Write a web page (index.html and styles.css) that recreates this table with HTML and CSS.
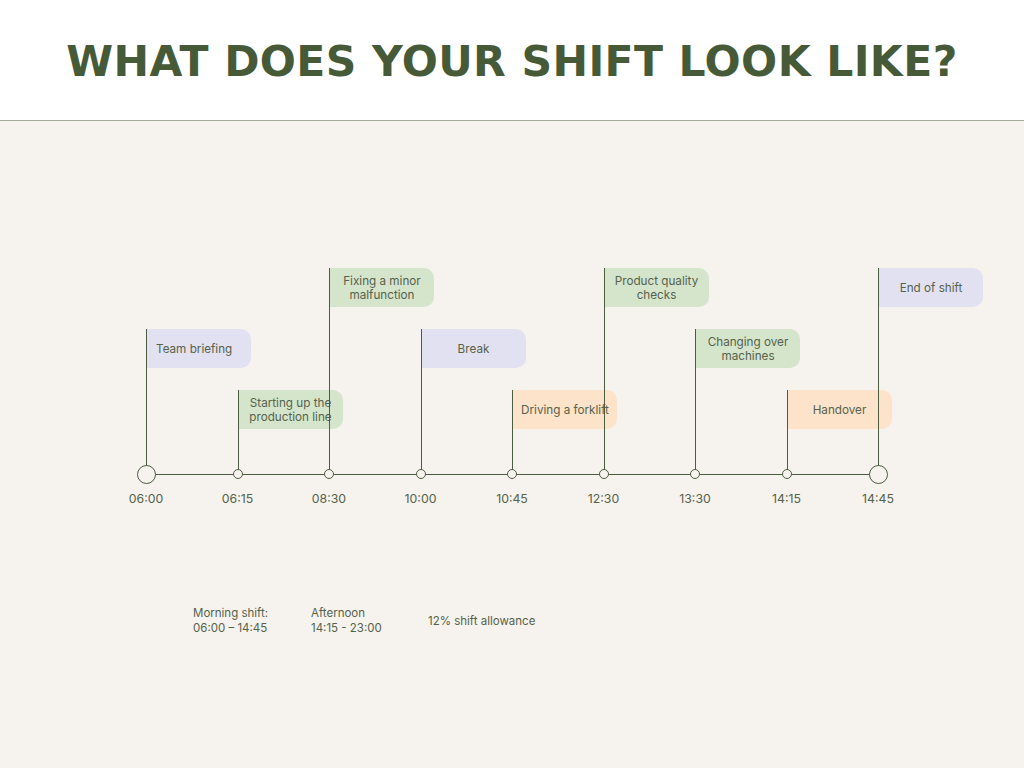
FILE: index.html
```html
<!DOCTYPE html>
<html lang="en">
<head>
<meta charset="utf-8">
<title>What does your shift look like?</title>
<link rel="stylesheet" href="styles.css">
</head>
<body>
<header class="header">
  <h1 class="title">WHAT DOES YOUR SHIFT LOOK LIKE?</h1>
</header>
<main class="main">
  <section class="chart">
    <div class="events">
      <div class="ev lvl1"><div class="flag purple nudge">Team briefing</div></div>
      <div class="ev lvl2"><div class="flag green">Starting up the production line</div></div>
      <div class="ev lvl0"><div class="flag green">Fixing a minor malfunction</div></div>
      <div class="ev lvl1"><div class="flag purple">Break</div></div>
      <div class="ev lvl2"><div class="flag peach">Driving a forklift</div></div>
      <div class="ev lvl0"><div class="flag green">Product quality checks</div></div>
      <div class="ev lvl1"><div class="flag green">Changing over machines</div></div>
      <div class="ev lvl2"><div class="flag peach">Handover</div></div>
      <div class="ev lvl0"><div class="flag purple">End of shift</div></div>
    </div>
    <div class="axis">
      <div class="tick"><span class="dot big"></span><span class="time">06:00</span></div>
      <div class="tick"><span class="dot"></span><span class="time">06:15</span></div>
      <div class="tick"><span class="dot"></span><span class="time">08:30</span></div>
      <div class="tick"><span class="dot"></span><span class="time">10:00</span></div>
      <div class="tick"><span class="dot"></span><span class="time">10:45</span></div>
      <div class="tick"><span class="dot"></span><span class="time">12:30</span></div>
      <div class="tick"><span class="dot"></span><span class="time">13:30</span></div>
      <div class="tick"><span class="dot"></span><span class="time">14:15</span></div>
      <div class="tick"><span class="dot big"></span><span class="time">14:45</span></div>
    </div>
  </section>
  <section class="notes">
    <p class="note n1">Morning shift:<br>06:00 – 14:45</p>
    <p class="note n2">Afternoon<br>14:15 - 23:00</p>
    <p class="note n3">12% shift allowance</p>
  </section>
</main>
</body>
</html>
```

FILE: styles.css
```css
* { box-sizing: border-box; }
html, body { margin: 0; padding: 0; }
body {
  width: 1024px;
  height: 768px;
  overflow: hidden;
  background: #f6f3ee;
  font-family: "Inter", "DejaVu Sans", sans-serif;
  color: #55624a;
}
.header {
  height: 121px;
  background: #ffffff;
  border-bottom: 1px solid #a3ad98;
  display: flex;
  align-items: center;
  justify-content: center;
}
.title {
  margin: 0;
  padding-top: 5px;
  font-family: "DejaVu Sans", sans-serif;
  font-weight: 700;
  font-size: 42.5px;
  letter-spacing: 0.4px;
  line-height: 1;
  color: #475a37;
}
.main {
  display: flex;
  flex-direction: column;
}
.chart {
  margin-top: 147px;
  padding-left: 146px;
}
.events {
  display: grid;
  grid-template-columns: repeat(9, 91.5px);
  height: 206px;
  align-items: end;
}
.ev {
  position: relative;
  border-left: 1px solid #4c5c40;
  z-index: 0;
}
.lvl0 { height: 206px; }
.lvl1 { height: 145px; }
.lvl2 { height: 84px; }
.flag {
  position: relative;
  z-index: 1;
  width: 104px;
  height: 39px;
  border-radius: 0 10px 10px 0;
  display: flex;
  align-items: center;
  justify-content: center;
  text-align: center;
  padding: 0 6px;
  font-size: 11.7px;
  line-height: 14px;
  color: #56624c;
}
.nudge { justify-content: flex-start; padding-left: 9px; }
.purple { background: #e2e1f1; }
.green { background: #d5e5cc; }
.peach { background: #fde3c9; }
.axis {
  position: relative;
  display: grid;
  grid-template-columns: repeat(9, 91.5px);
  margin-left: -45.75px;
  margin-top: -10px;
}
.axis::before {
  content: "";
  position: absolute;
  left: 45.75px;
  width: 732px;
  top: 9.5px;
  height: 1px;
  background: #4c5c40;
}
.tick {
  display: flex;
  flex-direction: column;
  align-items: center;
}
.dot {
  position: relative;
  width: 10px;
  height: 10px;
  margin: 5px 0;
  border: 1px solid #4c5c40;
  border-radius: 50%;
  background: #f6f3ee;
}
.dot.big {
  width: 19px;
  height: 19px;
  margin: 0.5px 0 0;
}
.time {
  margin-top: 7px;
  font-size: 12.3px;
  line-height: 16px;
  color: #55624a;
}
.notes {
  display: flex;
  align-items: center;
  margin-top: 99px;
  padding-left: 193px;
}
.note {
  margin: 0;
  font-size: 11.5px;
  line-height: 15px;
  color: #55624a;
}
.n1 { width: 118px; }
.n2 { width: 117px; }
```
